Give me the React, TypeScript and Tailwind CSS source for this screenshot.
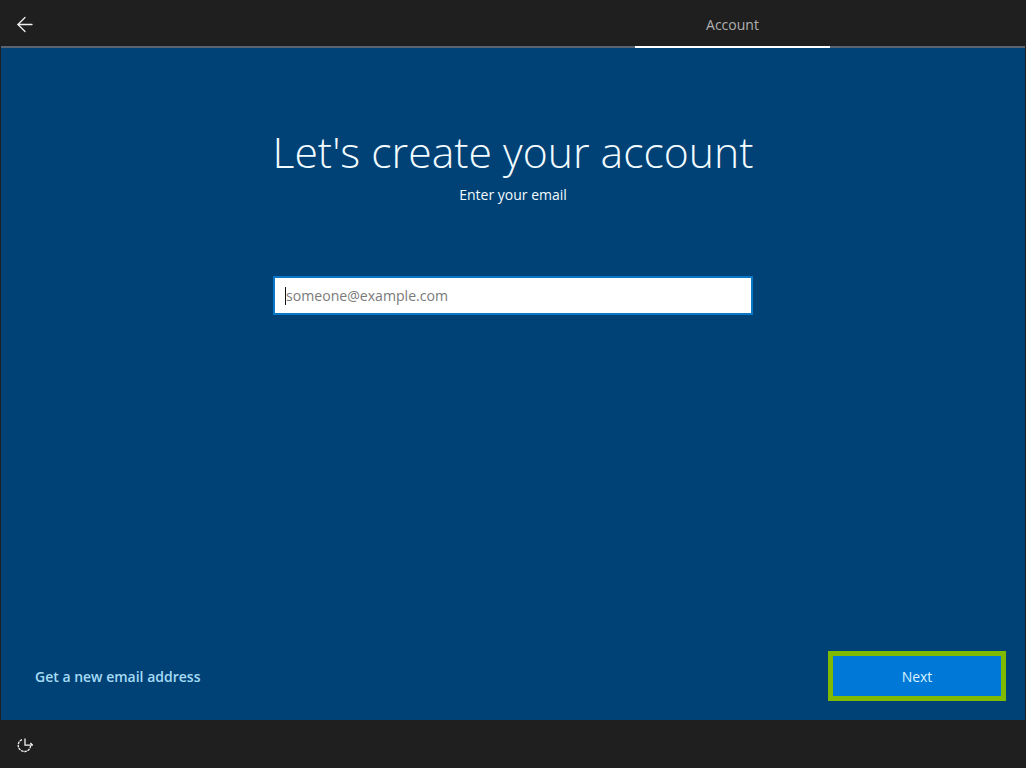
import { ArrowLeft } from "lucide-react";

function PowerClock() {
  // ease of access glyph at the bottom left of the setup screen
  return (
    <svg width="18" height="18" viewBox="0 0 18 18" fill="none" stroke="#f2f2f2" strokeWidth="1.3">
      <path d="M6 3.6a6.2 6.2 0 1 0 8.6 6.2" strokeDasharray="2.6 0.7" />
      <path d="M9 2.4v6.8h7.6" />
      <path d="M14.4 7l2.2 2.2" />
    </svg>
  );
}

export default function App() {
  return (
    <div className="flex h-[768px] w-[1026px] flex-col bg-[#1f1f1f] px-px font-['Open_Sans','Noto_Sans',sans-serif]">
      <header className="flex h-[48px] shrink-0 border-b-2 border-[#5a6470]">
        <button className="ml-[12px] flex h-[48px] w-[24px] items-center justify-center">
          <ArrowLeft size={25} strokeWidth={1.3} className="text-[#f0f0f0]" />
        </button>
        <div className="ml-[598px] -mb-[2px] flex h-[48px] w-[195px] items-center justify-center border-b-2 border-white pt-[2px] text-[14px] text-[#b0b0b0]">
          Account
        </div>
      </header>

      <main className="flex min-h-0 flex-1 flex-col items-center bg-[#004275]">
        <h1 className="mt-[74px] text-[42.7px] leading-[60px] font-light text-[#f2fbff]">Let's create your account</h1>
        <p className="mt-[3px] text-[14px] leading-[20px] text-[#f2fbff]">Enter your email</p>

        <div className="mt-[71px] flex h-[39px] w-[480px] items-center border-2 border-[#0a78c8] bg-white pl-[10px]">
          <span className="h-[18px] w-px bg-[#111]" />
          <span className="text-[14.1px] text-[#7a7a7a]">someone@example.com</span>
        </div>

        <div className="mt-auto mb-[19px] flex w-full items-center justify-between pr-[19px] pl-[34px]">
          <a className="text-[14px] font-semibold text-[#a5dcf5]">Get a new email address</a>
          <button className="h-[50px] w-[178px] border-[5px] border-[#7fba00] bg-[#0078d7] text-[14px] font-medium text-[#d8f3ff]">
            Next
          </button>
        </div>
      </main>

      <footer className="flex h-[48px] shrink-0 items-center pt-[2px] pl-[15px]">
        <PowerClock />
      </footer>
    </div>
  );
}
